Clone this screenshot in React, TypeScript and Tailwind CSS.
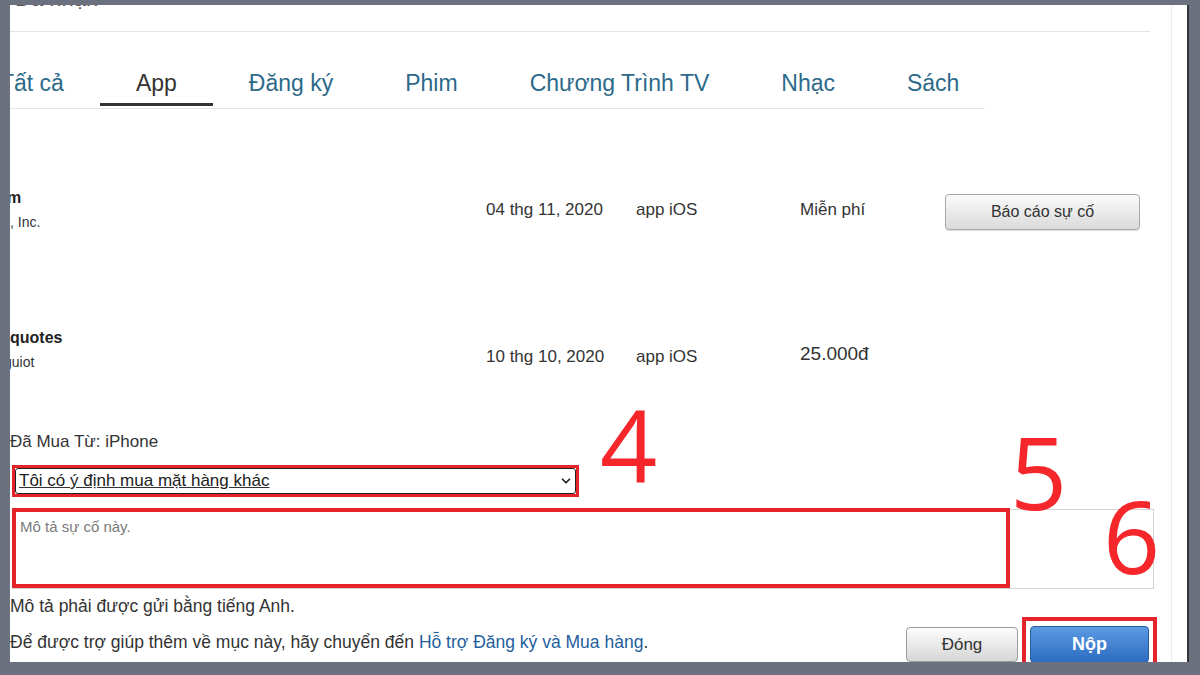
import { ChevronDown } from 'lucide-react';

const tabs = ['Tất cả', 'App', 'Đăng ký', 'Phim', 'Chương Trình TV', 'Nhạc', 'Sách'];

const font = "font-['Liberation_Sans',Arial,sans-serif]";

function PurchaseRow({
  name,
  vendor,
  date,
  price,
  nameClass,
  vendorClass,
  dateClass,
  priceClass,
  report,
  className,
}: {
  name: string;
  vendor: string;
  date: string;
  price: string;
  nameClass?: string;
  vendorClass?: string;
  dateClass?: string;
  priceClass?: string;
  report?: boolean;
  className?: string;
}) {
  return (
    <div className={`flex h-[60px] items-center ${className ?? ''}`}>
      <div className="flex w-[476px] flex-col overflow-hidden">
        <span className={`text-[16px] font-bold leading-[24px] text-[#222] ${nameClass ?? ''}`}>{name}</span>
        <span className={`text-[14px] leading-[24px] text-[#333] ${vendorClass ?? ''}`}>{vendor}</span>
      </div>
      <div className={`w-[150px] text-[17px] text-[#333] ${dateClass ?? ''}`}>{date}</div>
      <div className={`w-[164px] text-[17px] text-[#333] ${dateClass ?? ''}`}>app iOS</div>
      <div className={`w-[145px] text-[17px] text-[#333] ${priceClass ?? ''}`}>{price}</div>
      {report && (
        <button
          type="button"
          className="mt-[4px] flex h-[36px] w-[195px] items-center justify-center rounded-[4px] border border-[#a9a9a9] bg-linear-to-b from-[#fbfbfb] to-[#dadada] text-[16px] text-[#333] shadow-[0_1px_1px_rgba(0,0,0,0.15)]"
        >
          Báo cáo sự cố
        </button>
      )}
    </div>
  );
}

export default function App() {
  return (
    <div className={`h-[675px] w-[1200px] overflow-hidden bg-[#6b717e] pl-[10px] pt-[5px] ${font}`}>
      <div className="relative flex h-[657px] w-[1179px] overflow-hidden border-r-2 border-[#34363a] bg-white">
        <div className="h-full w-[1162px] shrink-0 border-r border-[#ececec]">
          {/* cut-off page title */}
          <div className="h-[27px] w-[1140px] overflow-hidden border-b border-[#e4e4e4] pl-[5px]">
            <div className="-mt-[19px] text-[22px] leading-[26px] text-[#555]">Đã nhận</div>
          </div>

          {/* category tabs */}
          <div className="-ml-[46px] flex w-[1021px] border-b border-[#e6e6e6] pb-[2px]">
            {tabs.map((tab) => (
              <div
                key={tab}
                className={`whitespace-nowrap border-b-[3px] px-[36px] pb-[7px] pt-[38px] text-[23px] leading-[26px] ${
                  tab === 'App' ? 'border-[#333] text-[#333]' : 'border-transparent text-[#2d6a8a]'
                }`}
              >
                {tab}
              </div>
            ))}
          </div>

          <PurchaseRow
            className="mt-[71px]"
            name="m"
            vendor=", Inc."
            nameClass="-ml-[3px]"
            date="04 thg 11, 2020"
            price="Miễn phí"
            report
          />
          <PurchaseRow
            className="mt-[80px]"
            name="quotes"
            vendor="guiot"
            vendorClass="-ml-[6px]"
            date="10 thg 10, 2020"
            dateClass="mt-[14px]"
            price="25.000đ"
            priceClass="mt-[8px] text-[19px]"
          />

          <div className="mt-[50px] text-[17px] leading-[24px] text-[#333]">Đã Mua Từ: iPhone</div>

          <div className="ml-[2px] mt-[11px] w-[567px] border-[3px] border-[#e4232b]">
            <div className="flex h-[26px] items-center justify-between rounded-[3px] border border-[#222] pl-[3px] pr-[2px]">
              <span className="text-[17px] leading-[20px] text-[#222] underline decoration-[#333]">
                Tôi có ý định mua mặt hàng khác
              </span>
              <ChevronDown size={14} strokeWidth={3} className="text-[#222]" />
            </div>
          </div>

          <div className="ml-[2px] mt-[12px] h-[80px] w-[1142px] border border-[#d4d4d4] px-[7px] pt-[6px] text-[15px] text-[#7a7a7a]">
            Mô tả sự cố này.
          </div>

          <div className="mt-[6px] text-[17.5px] leading-[22px] text-[#333]">Mô tả phải được gửi bằng tiếng Anh.</div>

          <div className="flex h-[51px] w-[1147px] items-center">
            <p className="flex-1 text-[17.5px] text-[#333]">
              Để được trợ giúp thêm về mục này, hãy chuyển đến{' '}
              <span className="text-[#1f5f9c]">Hỗ trợ Đăng ký và Mua hàng</span>.
            </p>
            <button
              type="button"
              className="mt-[4px] h-[35px] w-[112px] rounded-[4px] border border-[#9c9c9c] bg-linear-to-b from-[#fdfdfd] to-[#d6d6d6] text-[17px] font-medium text-[#333]"
            >
              Đóng
            </button>
            <div className="ml-[4px] border-4 border-[#e4232b] px-[4px] pb-[1px] pt-[5px]">
              <button
                type="button"
                className="h-[37px] w-[119px] rounded-[4px] border border-[#2a5c9c] bg-linear-to-b from-[#5b9be3] to-[#2c6cc0] text-[18px] font-bold text-white"
              >
                Nộp
              </button>
            </div>
          </div>
        </div>

        {/* tutorial annotations */}
        <div className="pointer-events-none absolute left-[2px] top-[503px] h-[80px] w-[998px] border-4 border-[#e4232b]" />
        <span className="absolute left-[590px] top-[389px] font-['Open_Sans',sans-serif] text-[100px] leading-none text-[#f5272b]">
          4
        </span>
        <span className="absolute left-[1000px] top-[416px] font-['Open_Sans',sans-serif] text-[100px] leading-none text-[#f5272b]">
          5
        </span>
        <span className="absolute left-[1093px] top-[480px] font-['Open_Sans',sans-serif] text-[100px] leading-none text-[#f5272b]">
          6
        </span>
      </div>
    </div>
  );
}
